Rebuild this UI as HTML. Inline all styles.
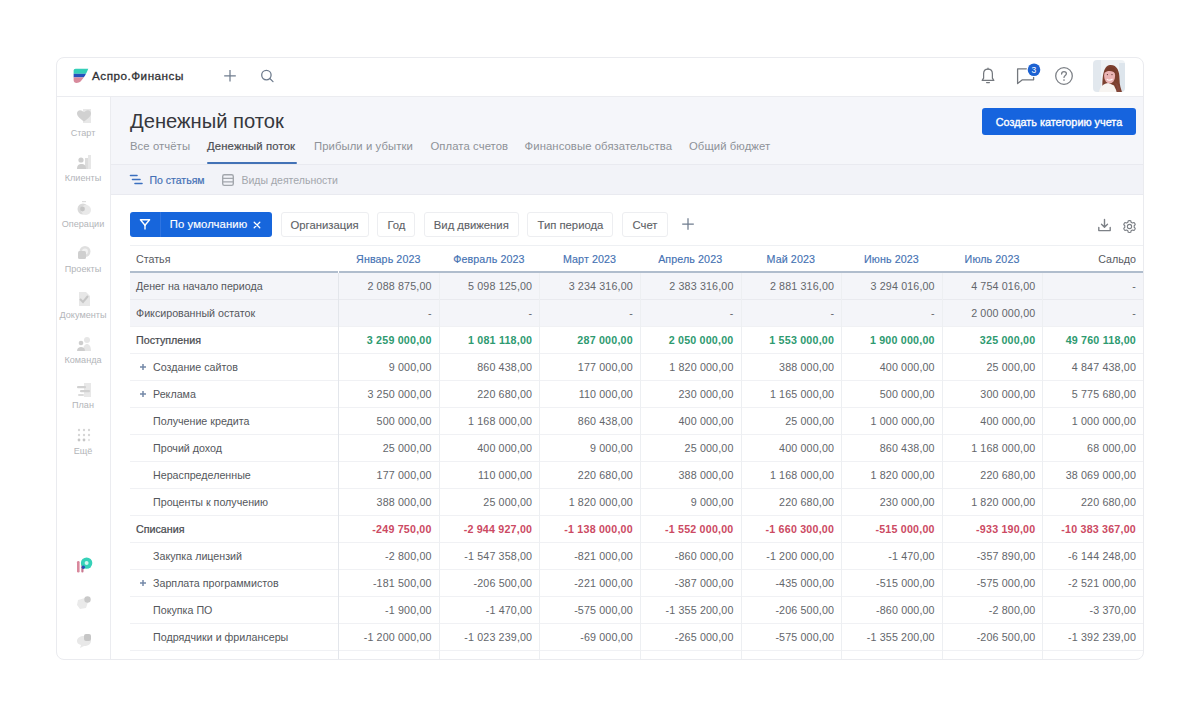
<!DOCTYPE html>
<html><head><meta charset="utf-8">
<style>
*{box-sizing:border-box;margin:0;padding:0}
html,body{width:1200px;height:716px;background:#fff;overflow:hidden;font-family:"Liberation Sans",sans-serif}
.abs{position:absolute}
#clip{position:absolute;left:56px;top:57px;width:1088px;height:603px;border-radius:8px;overflow:hidden;background:#fff}
#inner{position:absolute;left:-56px;top:-57px;width:1200px;height:716px}
#bord{position:absolute;left:56px;top:57px;width:1088px;height:603px;border:1px solid #eaebef;border-radius:8px}
.t{position:absolute;white-space:nowrap;line-height:1}
.th{font-size:10.7px;color:#575a5f}
.thm{font-size:10.7px;color:#4572b3;text-align:center;-webkit-text-stroke:0.15px #4572b3;letter-spacing:0.1px}
.lab{font-size:10.7px;color:#54575c}
.lb{font-size:10.7px;color:#47494e;-webkit-text-stroke:0.22px #47494e;letter-spacing:0px}
.v{font-size:10.7px;color:#63666b;text-align:right;letter-spacing:0.15px}
.vg{font-size:10.7px;color:#2e9a70;font-weight:700;text-align:right;letter-spacing:0.2px}
.vr{font-size:10.7px;color:#cc4a63;font-weight:700;text-align:right;letter-spacing:0.2px}
.plus{font-size:12px;color:#6c86a8}
.rl{height:1px;background:#f1f2f5}
.side{font-size:9.1px;color:#b3b5b9;text-align:center}
.tab{font-size:11.3px;color:#8e9298;letter-spacing:0.08px}
.tab.act{color:#4d4f54;letter-spacing:0.15px;-webkit-text-stroke:0.2px #4d4f54}
.sub1{font-size:10.5px;color:#4470b5;-webkit-text-stroke:0.2px #4470b5}
.sub2{font-size:10.5px;color:#a2a6ac}
.chip{border:1px solid #edeef1;border-radius:3px;background:#fff}
.chipt{font-size:11.3px;color:#5d6166;text-align:center;-webkit-text-stroke:0.1px #5d6166}
</style></head><body>
<div id="clip"><div id="inner">
<!-- header -->
<div class="abs" style="left:56px;top:57px;width:1088px;height:40px;background:#fff;border-bottom:1px solid #ebecf0"></div>
<!-- sidebar -->
<div class="abs" style="left:56px;top:97px;width:55px;height:570px;background:#fff;border-right:1px solid #ebecf0"></div>
<!-- title area -->
<div class="abs" style="left:111px;top:97px;width:1034px;height:67px;background:#f5f6fa"></div>
<div class="abs" style="left:111px;top:164px;width:1034px;height:31px;background:#f2f3f8;border-top:1px solid #e9eaf0;border-bottom:1px solid #e9eaf0"></div>
<div class="t" style="left:130px;top:111px;font-size:20.2px;color:#36383d">Денежный поток</div>
<svg class="abs" style="left:72px;top:68px" width="18" height="16" viewBox="0 0 18 16">
<defs><clipPath id="lg"><path d="M3.6 0.8 H16.3 C14.6 5 12.2 9.8 8.8 13.2 C7.6 14.4 6 14.9 4.6 14.9 C2.8 14.9 1.6 13.8 1.6 12.2 V2.8 C1.6 1.6 2.4 0.8 3.6 0.8 Z"/></clipPath></defs>
<g clip-path="url(#lg)"><rect x="0" y="0" width="18" height="5.8" fill="#34cfb8"/><rect x="0" y="5.8" width="18" height="3.6" fill="#2451bd"/><rect x="0" y="9.4" width="18" height="7" fill="#d88a9c"/></g></svg>
<div class="t" style="left:92px;top:70.4px;font-size:11.7px;color:#2f3034;letter-spacing:0.5px;-webkit-text-stroke:0.3px #2f3034">Аспро.Финансы</div>
<svg class="abs" style="left:223px;top:69px" width="14" height="14" viewBox="0 0 14 14"><path d="M7 1V12.5M1.2 6.8H12.8" stroke="#6f7c8e" stroke-width="1.25"/></svg>
<svg class="abs" style="left:260px;top:69px" width="15" height="15" viewBox="0 0 15 15"><circle cx="6.4" cy="6.1" r="4.7" fill="none" stroke="#6f7c8e" stroke-width="1.3"/><path d="M9.8 9.5L13 12.6" stroke="#6f7c8e" stroke-width="1.3" stroke-linecap="round"/></svg>
<svg class="abs" style="left:980px;top:67px" width="16" height="18" viewBox="0 0 16 18"><path d="M8 2.2C5.3 2.2 3.6 4.3 3.6 6.9V11.2L2.2 13.4H13.8L12.4 11.2V6.9C12.4 4.3 10.7 2.2 8 2.2Z" fill="none" stroke="#74787e" stroke-width="1.25" stroke-linejoin="round"/><path d="M8 1.2V2.2M6.6 15.6H9.4" stroke="#74787e" stroke-width="1.25" stroke-linecap="round"/></svg>
<svg class="abs" style="left:1014px;top:60px" width="28" height="26" viewBox="0 0 28 26"><path d="M3.6 8.9H19.6V19.8H8.4L3.6 23.5Z" fill="none" stroke="#74787e" stroke-width="1.3" stroke-linejoin="round"/><circle cx="20" cy="9.7" r="7.4" fill="#fff"/><circle cx="20" cy="9.7" r="6.3" fill="#1d62d2"/><text x="20" y="12.8" text-anchor="middle" font-family="Liberation Sans" font-size="8.6" fill="#fff">3</text></svg>
<svg class="abs" style="left:1054px;top:66px" width="20" height="20" viewBox="0 0 20 20"><circle cx="10" cy="10" r="8.3" fill="none" stroke="#7d8187" stroke-width="1.3"/><path d="M7.6 8C7.6 6.5 8.7 5.6 10 5.6S12.4 6.5 12.4 7.8C12.4 9.3 10 9.6 10 11.4" fill="none" stroke="#7d8187" stroke-width="1.3" stroke-linecap="round"/><circle cx="10" cy="14" r="0.85" fill="#7d8187"/></svg>
<svg class="abs" style="left:1093px;top:60px" width="32" height="32" viewBox="0 0 32 32">
<defs><clipPath id="av"><rect x="0" y="0" width="32" height="32" rx="4"/></clipPath><filter id="avb"><feGaussianBlur stdDeviation="0.35"/></filter></defs>
<g clip-path="url(#av)" filter="url(#avb)">
<rect width="32" height="32" fill="#eef2f5"/>
<rect x="0" y="0" width="8" height="32" fill="#e2e8ee"/>
<rect x="26" y="3" width="6" height="29" fill="#dde5ec"/>
<path d="M9.5 32C9 18 10 5.5 17 5S26.5 11 26.5 19C26.5 25 28 29 29 32Z" fill="#7b3f2f"/>
<path d="M6 32C7 26 11 23.5 15.5 23L21 25.5L24 32Z" fill="#f7f4f1"/>
<ellipse cx="16.6" cy="15.8" rx="5.5" ry="7.6" fill="#eab3b3"/>
<path d="M11.2 13C12 8.5 14.5 7.2 18 7.2S23 10.5 22.8 14C20.5 10.5 14.5 9.8 11.2 13Z" fill="#763a2b"/>
<path d="M13.8 19.2Q16.6 21.2 19.6 19" stroke="#fff6f6" stroke-width="1.1" fill="none"/>
<circle cx="14.4" cy="14.6" r="0.65" fill="#5a3a30"/><circle cx="19" cy="14.6" r="0.65" fill="#5a3a30"/>
<path d="M21 22C23 24 24.5 28 23.5 32H27.5C27 27 25 23 21 22Z" fill="#83473a"/>
</g></svg>
<svg class="abs" style="left:76px;top:108px;opacity:0.85;filter:blur(0.35px)" width="16" height="16" viewBox="0 0 16 16"><rect x="7" y="1" width="8" height="14" fill="#e4e4e4"/><path d="M8 13.5C3 10 1 8 1 5.3C1 3.5 2.4 2.2 4.1 2.2C5.5 2.2 6.5 3 8 4.3C9.5 3 10.5 2.2 11.9 2.2C13.6 2.2 15 3.5 15 5.3C15 8 13 10 8 13.5Z" fill="#c9c9c9"/></svg>
<div class="t side" style="left:56px;width:54px;top:128.5px">Старт</div>
<svg class="abs" style="left:76px;top:154px;opacity:0.85;filter:blur(0.35px)" width="16" height="16" viewBox="0 0 16 16"><rect x="12" y="1" width="3" height="14" fill="#e3e3e3"/><rect x="9" y="4" width="3" height="11" fill="#d8d8d8"/><circle cx="5" cy="6" r="2.6" fill="#c6c6c6"/><path d="M1 15C1 11 3 10 5.5 10S10 11 10 15Z" fill="#c6c6c6"/></svg>
<div class="t side" style="left:56px;width:54px;top:174.0px">Клиенты</div>
<svg class="abs" style="left:76px;top:200px;opacity:0.85;filter:blur(0.35px)" width="16" height="16" viewBox="0 0 16 16"><rect x="6" y="1" width="4" height="1.2" fill="#d6d6d6"/><circle cx="7" cy="9" r="5.5" fill="#d4d4d4"/><circle cx="10" cy="10" r="5" fill="#e6e6e6"/><circle cx="6.5" cy="9" r="2.4" fill="#bcbcbc"/></svg>
<div class="t side" style="left:56px;width:54px;top:219.5px">Операции</div>
<svg class="abs" style="left:76px;top:245px;opacity:0.85;filter:blur(0.35px)" width="16" height="16" viewBox="0 0 16 16"><circle cx="9" cy="6.5" r="5.5" fill="#dadada"/><circle cx="9" cy="6.5" r="3" fill="#f0f0f0"/><rect x="2" y="6" width="8" height="8" rx="1.5" fill="#c7c7c7"/></svg>
<div class="t side" style="left:56px;width:54px;top:264.5px">Проекты</div>
<svg class="abs" style="left:76px;top:291px;opacity:0.85;filter:blur(0.35px)" width="16" height="16" viewBox="0 0 16 16"><path d="M3 1H10L14 5V15H3Z" fill="#e3e3e3"/><path d="M4 8L7 11L12 5" stroke="#bdbdbd" stroke-width="2" fill="none"/></svg>
<div class="t side" style="left:56px;width:54px;top:310.5px">Документы</div>
<svg class="abs" style="left:76px;top:336px;opacity:0.85;filter:blur(0.35px)" width="16" height="16" viewBox="0 0 16 16"><circle cx="11" cy="4" r="3" fill="#e2e2e2"/><path d="M7 15C7 10 9 8 11 8S15 10 15 15Z" fill="#e2e2e2"/><circle cx="5" cy="7" r="2.3" fill="#c6c6c6"/><path d="M1 15C1 12 3 11 5 11S9 12 9 15Z" fill="#c6c6c6"/></svg>
<div class="t side" style="left:56px;width:54px;top:355.5px">Команда</div>
<svg class="abs" style="left:76px;top:382px;opacity:0.85;filter:blur(0.35px)" width="16" height="16" viewBox="0 0 16 16"><rect x="8" y="1" width="7" height="14" fill="#e4e4e4"/><rect x="1" y="4" width="9" height="2.2" rx="1" fill="#c9c9c9"/><rect x="4" y="8" width="10" height="2.2" rx="1" fill="#c9c9c9"/><rect x="2" y="12" width="6" height="2" rx="1" fill="#d5d5d5"/></svg>
<div class="t side" style="left:56px;width:54px;top:401.0px">План</div>
<svg class="abs" style="left:76px;top:427px;opacity:0.85;filter:blur(0.35px)" width="16" height="16" viewBox="0 0 16 16"><g fill="#cfcfcf"><circle cx="3" cy="3" r="1.2"/><circle cx="8" cy="3" r="1.2"/><circle cx="13" cy="3" r="1.2"/><circle cx="3" cy="8" r="1.2"/><circle cx="8" cy="8" r="1.2"/><circle cx="13" cy="8" r="1.2"/><circle cx="3" cy="13" r="1.4" fill="#bdbdbd"/><circle cx="8" cy="13" r="1.4" fill="#bdbdbd"/><circle cx="13" cy="13" r="1.2" fill="#e0e0e0"/></g></svg>
<div class="t side" style="left:56px;width:54px;top:446.5px">Ещё</div>
<svg class="abs" style="left:75px;top:555px" width="18" height="20" viewBox="0 0 18 20"><rect x="2" y="6" width="2.6" height="11.5" rx="1.2" fill="#d9889c"/><rect x="6.3" y="8" width="2.2" height="9.5" rx="1" fill="#c97890"/><circle cx="11.6" cy="8.1" r="5.7" fill="#36d1b8"/><circle cx="11.6" cy="8.1" r="2" fill="#d3f6f0"/><circle cx="8.3" cy="12.2" r="1.7" fill="#2a4fb4"/></svg>
<svg class="abs" style="left:75px;top:594px" width="18" height="18" viewBox="0 0 18 18"><path d="M3 6L10 4L13 8L11 14L5 15L2 11Z" fill="#eaeaea"/><circle cx="12.5" cy="5.5" r="3.2" fill="#c9c9c9"/></svg>
<svg class="abs" style="left:75px;top:631px" width="18" height="18" viewBox="0 0 18 18"><path d="M2 10C2 7 5 5 9 5S16 7 16 10S13 15 9 15L5 17L6 14C3 13 2 12 2 10Z" fill="#e8e8e8"/><rect x="9" y="3" width="7" height="7" rx="2" fill="#c6c6c6"/></svg>
<div class="t tab" style="left:130px;top:141px">Все отчёты</div>
<div class="t tab act" style="left:207px;top:141px">Денежный поток</div>
<div class="t tab" style="left:314px;top:141px">Прибыли и убытки</div>
<div class="t tab" style="left:430.5px;top:141px">Оплата счетов</div>
<div class="t tab" style="left:524.6px;top:141px">Финансовые обязательства</div>
<div class="t tab" style="left:689px;top:141px">Общий бюджет</div>
<div class="abs" style="left:207px;top:162px;width:90px;height:2px;background:#4272b6;border-radius:1px"></div>
<svg class="abs" style="left:129px;top:174px" width="14" height="12" viewBox="0 0 14 12"><path d="M1.5 1.5H8M3.5 5.5H11M6 9.5H13" stroke="#3b6fbf" stroke-width="1.6" stroke-linecap="round"/></svg>
<div class="t sub1" style="left:149.5px;top:174.5px">По статьям</div>
<svg class="abs" style="left:221px;top:173px" width="14" height="14" viewBox="0 0 14 14"><rect x="1.7" y="1.8" width="10.6" height="10.6" rx="1.6" fill="none" stroke="#a3a7ad" stroke-width="1.4"/><path d="M2 5.4H12M2 8.8H12" stroke="#a3a7ad" stroke-width="1.3"/></svg>
<div class="t sub2" style="left:241.5px;top:174.5px">Виды деятельности</div>
<div class="abs" style="left:982px;top:108px;width:154px;height:26.5px;background:#1664de;border-radius:3px"></div>
<div class="t" style="left:982px;width:154px;text-align:center;top:117px;font-size:10.85px;color:#fff;letter-spacing:0px;-webkit-text-stroke:0.35px #fff">Создать категорию учета</div>
<div class="abs" style="left:130px;top:212px;width:142px;height:25px;background:#1766dc;border-radius:3px"></div>
<div class="abs" style="left:160px;top:212px;width:1px;height:25px;background:#2f74e0"></div>
<svg class="abs" style="left:138px;top:217px" width="14" height="14" viewBox="0 0 14 14"><path d="M2.4 2.8H11.6L7 8.2Z" fill="none" stroke="#fff" stroke-width="1.4" stroke-linejoin="round"/><path d="M7 8.2V12" stroke="#fff" stroke-width="1.4" stroke-linecap="round"/></svg>
<div class="t" style="left:169.7px;top:219px;font-size:11.3px;color:#fff;letter-spacing:0.1px;-webkit-text-stroke:0.15px #fff">По умолчанию</div>
<svg class="abs" style="left:252.5px;top:220.5px" width="8" height="8" viewBox="0 0 8 8"><path d="M1.2 1.2L6.8 6.8M6.8 1.2L1.2 6.8" stroke="#fff" stroke-width="1.25" stroke-linecap="round"/></svg>
<div class="abs chip" style="left:280.5px;top:212px;width:88.2px;height:25px"></div>
<div class="t chipt" style="left:280.5px;width:88.2px;top:219.5px">Организация</div>
<div class="abs chip" style="left:377.4px;top:212px;width:38.1px;height:25px"></div>
<div class="t chipt" style="left:377.4px;width:38.1px;top:219.5px">Год</div>
<div class="abs chip" style="left:423.6px;top:212px;width:95.4px;height:25px"></div>
<div class="t chipt" style="left:423.6px;width:95.4px;top:219.5px">Вид движения</div>
<div class="abs chip" style="left:527.4px;top:212px;width:86.1px;height:25px"></div>
<div class="t chipt" style="left:527.4px;width:86.1px;top:219.5px">Тип периода</div>
<div class="abs chip" style="left:622px;top:212px;width:46.0px;height:25px"></div>
<div class="t chipt" style="left:622px;width:46.0px;top:219.5px">Счет</div>
<svg class="abs" style="left:681px;top:217px" width="14" height="14" viewBox="0 0 14 14"><path d="M7 1.2V12.8M1.2 7H12.8" stroke="#6f7c8e" stroke-width="1.25"/></svg>
<svg class="abs" style="left:1097px;top:218px" width="15" height="15" viewBox="0 0 15 15"><path d="M7.5 1.5V9M4.5 6.2L7.5 9.2L10.5 6.2" fill="none" stroke="#7d8187" stroke-width="1.4" stroke-linecap="round" stroke-linejoin="round"/><path d="M1.8 9.5V12.6H13.2V9.5" fill="none" stroke="#7d8187" stroke-width="1.4" stroke-linecap="round" stroke-linejoin="round"/></svg>
<svg class="abs" style="left:1122px;top:219px" width="15" height="15" viewBox="0 0 24 24"><path d="M12 2.5L14 2.8L14.6 5.2L16.6 6.3L19 5.6L20.5 7.1L21.2 9L19.5 10.8V13.2L21.2 15L20.5 16.9L19 18.4L16.6 17.7L14.6 18.8L14 21.2L12 21.5L10 21.2L9.4 18.8L7.4 17.7L5 18.4L3.5 16.9L2.8 15L4.5 13.2V10.8L2.8 9L3.5 7.1L5 5.6L7.4 6.3L9.4 5.2L10 2.8Z" fill="none" stroke="#7d8187" stroke-width="1.8" stroke-linejoin="round"/><circle cx="12" cy="12" r="3.4" fill="none" stroke="#7d8187" stroke-width="1.8"/></svg>
<div class="abs" style="left:130px;top:272px;width:1013px;height:27px;background:#f4f5f9"></div>
<div class="abs" style="left:130px;top:299px;width:1013px;height:27px;background:#f4f5f9"></div>
<div class="abs rl" style="left:130px;top:299px;width:1013px;background:#e9eaef"></div>
<div class="abs rl" style="left:130px;top:326px;width:1013px;background:#f0f1f4"></div>
<div class="abs rl" style="left:130px;top:353px;width:1013px;background:#f0f1f4"></div>
<div class="abs rl" style="left:130px;top:380px;width:1013px;background:#f0f1f4"></div>
<div class="abs rl" style="left:130px;top:407px;width:1013px;background:#f0f1f4"></div>
<div class="abs rl" style="left:130px;top:434px;width:1013px;background:#f0f1f4"></div>
<div class="abs rl" style="left:130px;top:461px;width:1013px;background:#f0f1f4"></div>
<div class="abs rl" style="left:130px;top:488px;width:1013px;background:#f0f1f4"></div>
<div class="abs rl" style="left:130px;top:515px;width:1013px;background:#f0f1f4"></div>
<div class="abs rl" style="left:130px;top:542px;width:1013px;background:#f0f1f4"></div>
<div class="abs rl" style="left:130px;top:569px;width:1013px;background:#f0f1f4"></div>
<div class="abs rl" style="left:130px;top:596px;width:1013px;background:#f0f1f4"></div>
<div class="abs rl" style="left:130px;top:623px;width:1013px;background:#f0f1f4"></div>
<div class="abs rl" style="left:130px;top:650px;width:1013px;background:#f0f1f4"></div>
<div class="abs rl" style="left:130px;top:677px;width:1013px;background:#f0f1f4"></div>
<div class="abs" style="left:130px;top:245px;width:1013px;height:1px;background:#eef0f3"></div>
<div class="abs" style="left:130px;top:271px;width:1013px;height:2px;background:#b0bdcd"></div>
<div class="abs" style="left:338.00px;top:273px;width:1px;height:400px;background:#e3e6eb"></div>
<div class="abs" style="left:338.00px;top:271px;width:1px;height:2px;background:#fff"></div>
<div class="abs" style="left:438.62px;top:273px;width:1px;height:400px;background:#edeff2"></div>
<div class="abs" style="left:539.25px;top:273px;width:1px;height:400px;background:#edeff2"></div>
<div class="abs" style="left:639.88px;top:273px;width:1px;height:400px;background:#edeff2"></div>
<div class="abs" style="left:740.50px;top:273px;width:1px;height:400px;background:#edeff2"></div>
<div class="abs" style="left:841.12px;top:273px;width:1px;height:400px;background:#edeff2"></div>
<div class="abs" style="left:941.75px;top:273px;width:1px;height:400px;background:#edeff2"></div>
<div class="abs" style="left:1042.38px;top:273px;width:1px;height:400px;background:#edeff2"></div>
<div class="t th" style="left:136px;top:254px">Статья</div>
<div class="t thm" style="left:338.00px;width:100.62px;top:254px">Январь 2023</div>
<div class="t thm" style="left:438.62px;width:100.62px;top:254px">Февраль 2023</div>
<div class="t thm" style="left:539.25px;width:100.62px;top:254px">Март 2023</div>
<div class="t thm" style="left:639.88px;width:100.62px;top:254px">Апрель 2023</div>
<div class="t thm" style="left:740.50px;width:100.62px;top:254px">Май 2023</div>
<div class="t thm" style="left:841.12px;width:100.62px;top:254px">Июнь 2023</div>
<div class="t thm" style="left:941.75px;width:100.62px;top:254px">Июль 2023</div>
<div class="t th" style="left:1042.38px;width:93.62px;top:254px;text-align:right">Сальдо</div>
<div class="t lab" style="left:136px;top:281px">Денег на начало периода</div>
<div class="t v" style="left:338.00px;width:93.62px;top:281px">2 088 875,00</div>
<div class="t v" style="left:438.62px;width:93.62px;top:281px">5 098 125,00</div>
<div class="t v" style="left:539.25px;width:93.62px;top:281px">3 234 316,00</div>
<div class="t v" style="left:639.88px;width:93.62px;top:281px">2 383 316,00</div>
<div class="t v" style="left:740.50px;width:93.62px;top:281px">2 881 316,00</div>
<div class="t v" style="left:841.12px;width:93.62px;top:281px">3 294 016,00</div>
<div class="t v" style="left:941.75px;width:93.62px;top:281px">4 754 016,00</div>
<div class="t v" style="left:1042.38px;width:93.62px;top:281px">-</div>
<div class="t lab" style="left:136px;top:308px">Фиксированный остаток</div>
<div class="t v" style="left:338.00px;width:93.62px;top:308px">-</div>
<div class="t v" style="left:438.62px;width:93.62px;top:308px">-</div>
<div class="t v" style="left:539.25px;width:93.62px;top:308px">-</div>
<div class="t v" style="left:639.88px;width:93.62px;top:308px">-</div>
<div class="t v" style="left:740.50px;width:93.62px;top:308px">-</div>
<div class="t v" style="left:841.12px;width:93.62px;top:308px">-</div>
<div class="t v" style="left:941.75px;width:93.62px;top:308px">2 000 000,00</div>
<div class="t v" style="left:1042.38px;width:93.62px;top:308px">-</div>
<div class="t lb" style="left:136px;top:335px">Поступления</div>
<div class="t vg" style="left:338.00px;width:93.62px;top:335px">3 259 000,00</div>
<div class="t vg" style="left:438.62px;width:93.62px;top:335px">1 081 118,00</div>
<div class="t vg" style="left:539.25px;width:93.62px;top:335px">287 000,00</div>
<div class="t vg" style="left:639.88px;width:93.62px;top:335px">2 050 000,00</div>
<div class="t vg" style="left:740.50px;width:93.62px;top:335px">1 553 000,00</div>
<div class="t vg" style="left:841.12px;width:93.62px;top:335px">1 900 000,00</div>
<div class="t vg" style="left:941.75px;width:93.62px;top:335px">325 000,00</div>
<div class="t vg" style="left:1042.38px;width:93.62px;top:335px">49 760 118,00</div>
<svg class="abs" style="left:139px;top:363px" width="8" height="8" viewBox="0 0 8 8"><path d="M4 1V7M1 4H7" stroke="#7489a8" stroke-width="1.5"/></svg>
<div class="t lab" style="left:153px;top:362px">Создание сайтов</div>
<div class="t v" style="left:338.00px;width:93.62px;top:362px">9 000,00</div>
<div class="t v" style="left:438.62px;width:93.62px;top:362px">860 438,00</div>
<div class="t v" style="left:539.25px;width:93.62px;top:362px">177 000,00</div>
<div class="t v" style="left:639.88px;width:93.62px;top:362px">1 820 000,00</div>
<div class="t v" style="left:740.50px;width:93.62px;top:362px">388 000,00</div>
<div class="t v" style="left:841.12px;width:93.62px;top:362px">400 000,00</div>
<div class="t v" style="left:941.75px;width:93.62px;top:362px">25 000,00</div>
<div class="t v" style="left:1042.38px;width:93.62px;top:362px">4 847 438,00</div>
<svg class="abs" style="left:139px;top:390px" width="8" height="8" viewBox="0 0 8 8"><path d="M4 1V7M1 4H7" stroke="#7489a8" stroke-width="1.5"/></svg>
<div class="t lab" style="left:153px;top:389px">Реклама</div>
<div class="t v" style="left:338.00px;width:93.62px;top:389px">3 250 000,00</div>
<div class="t v" style="left:438.62px;width:93.62px;top:389px">220 680,00</div>
<div class="t v" style="left:539.25px;width:93.62px;top:389px">110 000,00</div>
<div class="t v" style="left:639.88px;width:93.62px;top:389px">230 000,00</div>
<div class="t v" style="left:740.50px;width:93.62px;top:389px">1 165 000,00</div>
<div class="t v" style="left:841.12px;width:93.62px;top:389px">500 000,00</div>
<div class="t v" style="left:941.75px;width:93.62px;top:389px">300 000,00</div>
<div class="t v" style="left:1042.38px;width:93.62px;top:389px">5 775 680,00</div>
<div class="t lab" style="left:153px;top:416px">Получение кредита</div>
<div class="t v" style="left:338.00px;width:93.62px;top:416px">500 000,00</div>
<div class="t v" style="left:438.62px;width:93.62px;top:416px">1 168 000,00</div>
<div class="t v" style="left:539.25px;width:93.62px;top:416px">860 438,00</div>
<div class="t v" style="left:639.88px;width:93.62px;top:416px">400 000,00</div>
<div class="t v" style="left:740.50px;width:93.62px;top:416px">25 000,00</div>
<div class="t v" style="left:841.12px;width:93.62px;top:416px">1 000 000,00</div>
<div class="t v" style="left:941.75px;width:93.62px;top:416px">400 000,00</div>
<div class="t v" style="left:1042.38px;width:93.62px;top:416px">1 000 000,00</div>
<div class="t lab" style="left:153px;top:443px">Прочий доход</div>
<div class="t v" style="left:338.00px;width:93.62px;top:443px">25 000,00</div>
<div class="t v" style="left:438.62px;width:93.62px;top:443px">400 000,00</div>
<div class="t v" style="left:539.25px;width:93.62px;top:443px">9 000,00</div>
<div class="t v" style="left:639.88px;width:93.62px;top:443px">25 000,00</div>
<div class="t v" style="left:740.50px;width:93.62px;top:443px">400 000,00</div>
<div class="t v" style="left:841.12px;width:93.62px;top:443px">860 438,00</div>
<div class="t v" style="left:941.75px;width:93.62px;top:443px">1 168 000,00</div>
<div class="t v" style="left:1042.38px;width:93.62px;top:443px">68 000,00</div>
<div class="t lab" style="left:153px;top:470px">Нераспределенные</div>
<div class="t v" style="left:338.00px;width:93.62px;top:470px">177 000,00</div>
<div class="t v" style="left:438.62px;width:93.62px;top:470px">110 000,00</div>
<div class="t v" style="left:539.25px;width:93.62px;top:470px">220 680,00</div>
<div class="t v" style="left:639.88px;width:93.62px;top:470px">388 000,00</div>
<div class="t v" style="left:740.50px;width:93.62px;top:470px">1 168 000,00</div>
<div class="t v" style="left:841.12px;width:93.62px;top:470px">1 820 000,00</div>
<div class="t v" style="left:941.75px;width:93.62px;top:470px">220 680,00</div>
<div class="t v" style="left:1042.38px;width:93.62px;top:470px">38 069 000,00</div>
<div class="t lab" style="left:153px;top:497px">Проценты к получению</div>
<div class="t v" style="left:338.00px;width:93.62px;top:497px">388 000,00</div>
<div class="t v" style="left:438.62px;width:93.62px;top:497px">25 000,00</div>
<div class="t v" style="left:539.25px;width:93.62px;top:497px">1 820 000,00</div>
<div class="t v" style="left:639.88px;width:93.62px;top:497px">9 000,00</div>
<div class="t v" style="left:740.50px;width:93.62px;top:497px">220 680,00</div>
<div class="t v" style="left:841.12px;width:93.62px;top:497px">230 000,00</div>
<div class="t v" style="left:941.75px;width:93.62px;top:497px">1 820 000,00</div>
<div class="t v" style="left:1042.38px;width:93.62px;top:497px">220 680,00</div>
<div class="t lb" style="left:136px;top:524px">Списания</div>
<div class="t vr" style="left:338.00px;width:93.62px;top:524px">-249 750,00</div>
<div class="t vr" style="left:438.62px;width:93.62px;top:524px">-2 944 927,00</div>
<div class="t vr" style="left:539.25px;width:93.62px;top:524px">-1 138 000,00</div>
<div class="t vr" style="left:639.88px;width:93.62px;top:524px">-1 552 000,00</div>
<div class="t vr" style="left:740.50px;width:93.62px;top:524px">-1 660 300,00</div>
<div class="t vr" style="left:841.12px;width:93.62px;top:524px">-515 000,00</div>
<div class="t vr" style="left:941.75px;width:93.62px;top:524px">-933 190,00</div>
<div class="t vr" style="left:1042.38px;width:93.62px;top:524px">-10 383 367,00</div>
<div class="t lab" style="left:153px;top:551px">Закупка лицензий</div>
<div class="t v" style="left:338.00px;width:93.62px;top:551px">-2 800,00</div>
<div class="t v" style="left:438.62px;width:93.62px;top:551px">-1 547 358,00</div>
<div class="t v" style="left:539.25px;width:93.62px;top:551px">-821 000,00</div>
<div class="t v" style="left:639.88px;width:93.62px;top:551px">-860 000,00</div>
<div class="t v" style="left:740.50px;width:93.62px;top:551px">-1 200 000,00</div>
<div class="t v" style="left:841.12px;width:93.62px;top:551px">-1 470,00</div>
<div class="t v" style="left:941.75px;width:93.62px;top:551px">-357 890,00</div>
<div class="t v" style="left:1042.38px;width:93.62px;top:551px">-6 144 248,00</div>
<svg class="abs" style="left:139px;top:579px" width="8" height="8" viewBox="0 0 8 8"><path d="M4 1V7M1 4H7" stroke="#7489a8" stroke-width="1.5"/></svg>
<div class="t lab" style="left:153px;top:578px">Зарплата программистов</div>
<div class="t v" style="left:338.00px;width:93.62px;top:578px">-181 500,00</div>
<div class="t v" style="left:438.62px;width:93.62px;top:578px">-206 500,00</div>
<div class="t v" style="left:539.25px;width:93.62px;top:578px">-221 000,00</div>
<div class="t v" style="left:639.88px;width:93.62px;top:578px">-387 000,00</div>
<div class="t v" style="left:740.50px;width:93.62px;top:578px">-435 000,00</div>
<div class="t v" style="left:841.12px;width:93.62px;top:578px">-515 000,00</div>
<div class="t v" style="left:941.75px;width:93.62px;top:578px">-575 000,00</div>
<div class="t v" style="left:1042.38px;width:93.62px;top:578px">-2 521 000,00</div>
<div class="t lab" style="left:153px;top:605px">Покупка ПО</div>
<div class="t v" style="left:338.00px;width:93.62px;top:605px">-1 900,00</div>
<div class="t v" style="left:438.62px;width:93.62px;top:605px">-1 470,00</div>
<div class="t v" style="left:539.25px;width:93.62px;top:605px">-575 000,00</div>
<div class="t v" style="left:639.88px;width:93.62px;top:605px">-1 355 200,00</div>
<div class="t v" style="left:740.50px;width:93.62px;top:605px">-206 500,00</div>
<div class="t v" style="left:841.12px;width:93.62px;top:605px">-860 000,00</div>
<div class="t v" style="left:941.75px;width:93.62px;top:605px">-2 800,00</div>
<div class="t v" style="left:1042.38px;width:93.62px;top:605px">-3 370,00</div>
<div class="t lab" style="left:153px;top:632px">Подрядчики и фрилансеры</div>
<div class="t v" style="left:338.00px;width:93.62px;top:632px">-1 200 000,00</div>
<div class="t v" style="left:438.62px;width:93.62px;top:632px">-1 023 239,00</div>
<div class="t v" style="left:539.25px;width:93.62px;top:632px">-69 000,00</div>
<div class="t v" style="left:639.88px;width:93.62px;top:632px">-265 000,00</div>
<div class="t v" style="left:740.50px;width:93.62px;top:632px">-575 000,00</div>
<div class="t v" style="left:841.12px;width:93.62px;top:632px">-1 355 200,00</div>
<div class="t v" style="left:941.75px;width:93.62px;top:632px">-206 500,00</div>
<div class="t v" style="left:1042.38px;width:93.62px;top:632px">-1 392 239,00</div>
<div class="t v" style="left:338.00px;width:93.62px;top:659px"></div>
<div class="t v" style="left:438.62px;width:93.62px;top:659px"></div>
<div class="t v" style="left:539.25px;width:93.62px;top:659px"></div>
<div class="t v" style="left:639.88px;width:93.62px;top:659px"></div>
<div class="t v" style="left:740.50px;width:93.62px;top:659px"></div>
<div class="t v" style="left:841.12px;width:93.62px;top:659px"></div>
<div class="t v" style="left:941.75px;width:93.62px;top:659px"></div>
<div class="t v" style="left:1042.38px;width:93.62px;top:659px"></div>
</div></div>
<div id="bord"></div>
</body></html>
